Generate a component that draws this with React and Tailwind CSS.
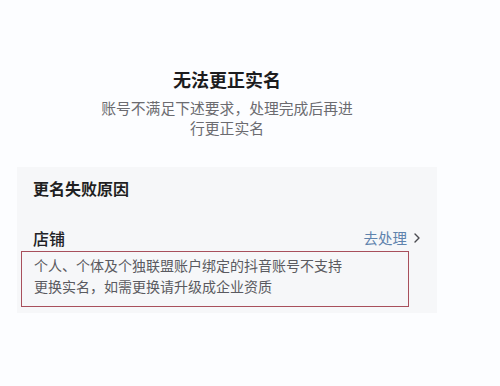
export default function App() {
  return (
    <div
      className="w-[500px] h-[386px] bg-[#fcfdff] overflow-hidden"
      style={{ fontFamily: '"Noto Sans CJK SC", "Noto Sans", sans-serif' }}
    >
      <div className="ml-[17px] w-[420px]">
        {/* Header */}
        <div className="flex flex-col items-center pt-[66px]">
          <h1 className="text-[18px] leading-[26px] font-bold text-[#1c1c1e]">无法更正实名</h1>
          <p className="mt-[6px] w-[262px] text-center text-[14.8px] leading-[20px] text-[#6b6b70]">
            账号不满足下述要求，处理完成后再进行更正实名
          </p>
        </div>

        {/* Reason card */}
        <div className="mt-[29px] h-[146px] bg-[#f6f7f9] pt-[9px]">
          <div className="pl-[16px] text-[16px] leading-[24px] font-bold text-[#1f1f22]">更名失败原因</div>
          <div className="mt-[26px] flex items-center justify-between pl-[16px] pr-[16px]">
            <span className="text-[16px] leading-[24px] font-medium text-[#222226]">店铺</span>
            <span className="flex items-center gap-[6px] text-[14.5px] leading-[24px] text-[#5f83ad]">
              去处理
              <svg width="8" height="12" viewBox="0 0 8 12" fill="none">
                <path d="M2 2l4 4-4 4" stroke="#4a4a50" strokeWidth="1.4" strokeLinecap="round" strokeLinejoin="round" />
              </svg>
            </span>
          </div>
          <div className="ml-[4px] mt-[1px] w-[388px] h-[56px] border-[1.5px] border-[#a8505c] pl-[12px] pt-[3px] text-[14px] leading-[21px] text-[#5a5a60]">
            <p>个人、个体及个独联盟账户绑定的抖音账号不支持</p>
            <p>更换实名，如需更换请升级成企业资质</p>
          </div>
        </div>
      </div>
    </div>
  )
}
